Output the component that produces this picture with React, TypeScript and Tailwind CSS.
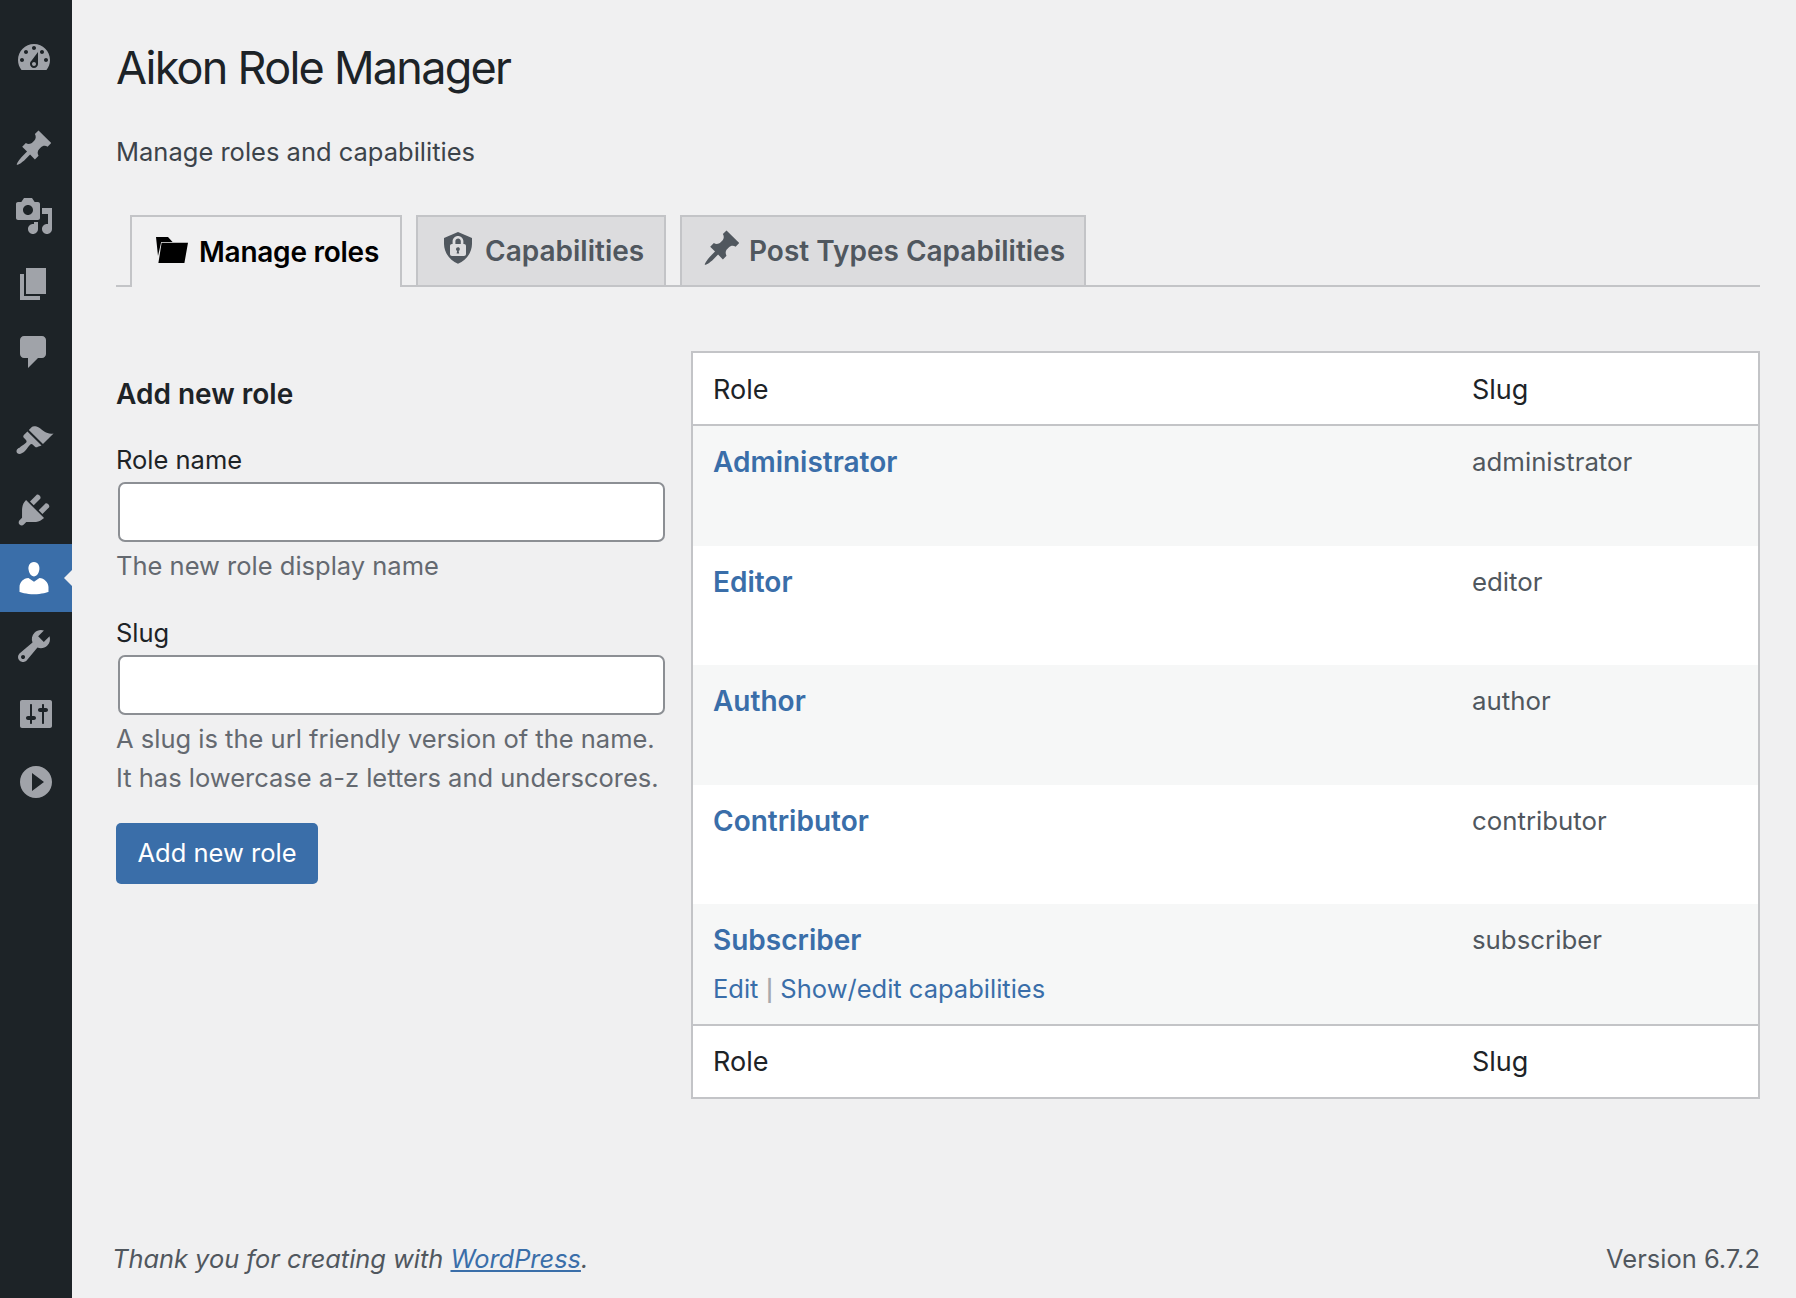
const FONT = "font-['Inter','Liberation_Sans',sans-serif]"

const ICONS = {
  dashboard:
    "M3.76 16h12.48c1.1-1.37 1.76-3.11 1.76-5 0-4.42-3.58-8-8-8s-8 3.58-8 8c0 1.89.66 3.63 1.76 5zM10 4c.55 0 1 .45 1 1s-.45 1-1 1-1-.45-1-1 .45-1 1-1zM6 6c.55 0 1 .45 1 1s-.45 1-1 1-1-.45-1-1 .45-1 1-1zm8 0c.55 0 1 .45 1 1s-.45 1-1 1-1-.45-1-1 .45-1 1-1zm-5.37 5.55L12 7v6c0 1.1-.9 2-2 2s-2-.9-2-2c0-.57.24-1.08.63-1.45zM4 10c.55 0 1 .45 1 1s-.45 1-1 1-1-.45-1-1 .45-1 1-1zm12 0c.55 0 1 .45 1 1s-.45 1-1 1-1-.45-1-1 .45-1 1-1zm-5 3c0-.55-.45-1-1-1s-1 .45-1 1 .45 1 1 1 1-.45 1-1z",
  pin: "M10.44 3.02l1.82-1.82 6.36 6.35-1.83 1.82c-1.05-.68-2.48-.57-3.41.36l-.75.75c-.92.93-1.04 2.35-.35 3.41l-1.83 1.82-2.41-2.41-2.8 2.79c-.42.42-3.38 2.71-3.8 2.29s1.86-3.39 2.28-3.81l2.79-2.79L4.1 9.36l1.83-1.82c1.05.69 2.48.57 3.4-.36l.75-.75c.93-.92 1.05-2.35.36-3.41z",
  media:
    "M13 11V4c0-.55-.45-1-1-1h-1.67L9 1H5L3.67 3H2c-.55 0-1 .45-1 1v7c0 .55.45 1 1 1h10c.55 0 1-.45 1-1zM7 4.5c1.38 0 2.5 1.12 2.5 2.5S8.38 9.5 7 9.5 4.5 8.38 4.5 7 5.62 4.5 7 4.5zM14 6h5v10.5c0 1.38-1.12 2.5-2.5 2.5S14 17.88 14 16.5s1.12-2.5 2.5-2.5c.17 0 .34.02.5.05V9h-3V6zm-4 8.05V13h2v3.5c0 1.38-1.12 2.5-2.5 2.5S7 17.88 7 16.5 8.12 14 9.5 14c.17 0 .34.02.5.05z",
  page: "M6 15V2h10v13H6zm-1 1h8v2H3V5h2v11z",
  comments: "M5 2h9c1.1 0 2 .9 2 2v7c0 1.1-.9 2-2 2h-2l-5 5v-5H5c-1.1 0-2-.9-2-2V4c0-1.1.9-2 2-2z",
  appearance:
    "M14.48 11.06L7.41 3.99l1.5-1.5c.5-.56 2.3-.47 3.51.32 1.21.8 1.43 1.28 2.91 2.1 1.18.64 2.45 1.26 4.45.85zm-.71.71L6.7 4.7 4.93 6.47c-.39.39-.39 1.02 0 1.41l1.06 1.06c.39.39.39 1.03 0 1.42-.6.6-1.43 1.11-2.21 1.69-.35.26-.7.53-1.01.84C1.43 13.23.77 14.8 1.7 15.6c.94.87 2.46.2 3.8-1.07.31-.31.58-.66.84-1.01.57-.78 1.05-1.6 1.69-2.2.39-.39 1.02-.39 1.41 0l1.06 1.06c.39.39 1.02.39 1.41 0z",
  plugins:
    "M13.11 4.36L9.87 7.6 8 5.73l3.24-3.24c.35-.34 1.05-.2 1.56.32.52.51.66 1.21.31 1.55zm-8 1.77l.91-1.12 9.01 9.01-1.19.84c-.71.71-2.63 1.16-3.82 1.16H6.14L4.9 17.26c-.59.59-1.54.59-2.12 0-.59-.58-.59-1.53 0-2.12l1.24-1.24v-3.88c0-1.13.4-3.19 1.09-3.89zm7.26 3.97l3.24-3.24c.34-.35 1.04-.21 1.55.31.52.51.66 1.21.31 1.55l-3.24 3.25z",
  users:
    "M10 9.25c-2.27 0-2.73-3.44-2.73-3.44C7 4.02 7.82 2 9.97 2c2.16 0 2.98 2.02 2.71 3.81 0 0-.41 3.44-2.68 3.44zm0 2.57L12.72 10c2.39 0 4.52 2.33 4.52 4.53v2.49s-3.65 1.13-7.24 1.13c-3.65 0-7.24-1.13-7.24-1.13v-2.49c0-2.25 1.94-4.48 4.47-4.48z",
  tools:
    "M16.68 9.77c-1.34 1.34-3.3 1.67-4.95.99l-5.41 6.52c-.99.99-2.59.99-3.58 0s-.99-2.59 0-3.57l6.52-5.42c-.68-1.65-.35-3.61.99-4.95 1.28-1.28 3.12-1.62 4.72-1.06l-2.89 2.89 2.82 2.82 2.86-2.87c.53 1.58.18 3.39-1.08 4.65zM3.81 16.21c.4.39 1.04.39 1.43 0 .4-.4.4-1.04 0-1.43-.39-.4-1.03-.4-1.43 0-.39.39-.39 1.03 0 1.43z",
  settings:
    "M18 16V4c0-.55-.45-1-1-1H3c-.55 0-1 .45-1 1v12c0 .55.45 1 1 1h14c.55 0 1-.45 1-1zM8 11h1c.55 0 1 .45 1 1s-.45 1-1 1H8v1.5c0 .28-.22.5-.5.5s-.5-.22-.5-.5V13H6c-.55 0-1-.45-1-1s.45-1 1-1h1V5.5c0-.28.22-.5.5-.5s.5.22.5.5V11zm5-2h-1c-.55 0-1-.45-1-1s.45-1 1-1h1V5.5c0-.28.22-.5.5-.5s.5.22.5.5V7h1c.55 0 1 .45 1 1s-.45 1-1 1h-1v5.5c0 .28-.22.5-.5.5s-.5-.22-.5-.5V9z",
  play: "M10 2c4.42 0 8 3.58 8 8s-3.58 8-8 8-8-3.58-8-8 3.58-8 8-8zm-2 12.5l6-4.5-6-4.5v9z",
  folder: "M2 4h6l2.3 2.5H4.6L3 13.5zM4.8 6.9H18l-1.8 10.1H3.2z",
  privacy:
    "M10 9.6c-.6 0-1 .4-1 1 0 .4.3.7.6.8l-.3 1.4h1.3l-.3-1.4c.4-.1.6-.4.6-.8.1-.6-.3-1-.9-1zm.1-4.3c-.7 0-1.4.5-1.4 1.2V8h2.7V6.5c-.1-.7-.6-1.2-1.3-1.2zM10 2L3 5v3c.1 4.4 2.9 8.3 7 9.9 4.1-1.6 6.9-5.5 7-9.9V5l-7-3zm4 11c0 .6-.4 1-1 1H7c-.6 0-1-.4-1-1V9c0-.6.4-1 1-1h.3V6.5C7.4 5.1 8.6 4 10 4c1.4 0 2.6 1.1 2.7 2.5V8h.3c.6 0 1 .4 1 1v4z",
}

type IconName = keyof typeof ICONS

function Icon({ name, className }: { name: IconName; className?: string }) {
  return (
    <svg viewBox="0 0 20 20" className={className} fill="currentColor" aria-hidden>
      <path fillRule="evenodd" d={ICONS[name]} />
    </svg>
  )
}

function MenuItem({ name, active, nudge }: { name: IconName; active?: boolean; nudge?: boolean }) {
  return (
    <div
      className={
        active
          ? "relative flex h-[68px] items-center pl-[14px] bg-[#3a6ea9] text-white"
          : nudge
            ? "flex h-[68px] items-center pl-4 text-[#a0a3a9]"
            : "flex h-[68px] items-center pl-[14px] text-[#a0a3a9]"
      }
    >
      <Icon name={name} className="h-10 w-10" />
      {active && (
        <span className="absolute right-0 top-[26px] h-0 w-0 border-y-8 border-r-8 border-y-transparent border-r-[#f0f0f1]" />
      )}
    </div>
  )
}

function Sidebar() {
  return (
    <aside className="w-[72px] shrink-0 bg-[#1d2327] pt-6">
      <MenuItem name="dashboard" />
      <div className="h-[22px]" />
      <MenuItem name="pin" />
      <MenuItem name="media" />
      <MenuItem name="page" />
      <MenuItem name="comments" />
      <div className="h-[22px]" />
      <MenuItem name="appearance" />
      <MenuItem name="plugins" />
      <MenuItem name="users" active />
      <MenuItem name="tools" />
      <MenuItem name="settings" nudge />
      <MenuItem name="play" nudge />
    </aside>
  )
}

function Tabs() {
  return (
    <div className="mt-[47px] flex h-[72px] items-stretch gap-[14px] border-b-2 border-[#c3c4c7] pl-[14px]">
      <div className="-mb-[2px] flex w-[272px] items-center gap-[7px] border-2 border-b-0 border-[#c3c4c7] bg-[#f0f0f1] pl-5 text-[28px] font-semibold tracking-[-0.25px] text-black">
        <Icon name="folder" className="-mt-[7px] h-10 w-10" />
        Manage roles
      </div>
      <div className="flex w-[250px] items-center gap-[7px] border-2 border-b-0 border-[#c3c4c7] bg-[#dcdcde] pl-5 text-[28px] font-semibold text-[#50575e]">
        <Icon name="privacy" className="-mt-[7px] h-10 w-10" />
        Capabilities
      </div>
      <div className="flex w-[406px] items-center gap-[7px] border-2 border-b-0 border-[#c3c4c7] bg-[#dcdcde] pl-5 text-[28px] font-semibold text-[#50575e]">
        <Icon name="pin" className="-mt-[7px] h-10 w-10" />
        Post Types Capabilities
      </div>
    </div>
  )
}

function AddRoleForm() {
  return (
    <div className="w-[550px] shrink-0 pt-6">
      <h2 className="text-[28px] font-semibold leading-[38px] text-[#1d2327]">Add new role</h2>
      <label className="mt-[31px] block leading-8 text-[#1d2327]">Role name</label>
      <input className="mt-[6px] ml-[2px] block h-[60px] w-[547px] rounded-[7px] border-2 border-[#8c8f94] bg-white" />
      <p className="mt-[8px] leading-8 text-[#646970]">The new role display name</p>
      <label className="mt-[35px] block leading-8 text-[#1d2327]">Slug</label>
      <input className="mt-[6px] ml-[2px] block h-[60px] w-[547px] rounded-[7px] border-2 border-[#8c8f94] bg-white" />
      <p className="mt-[4px] leading-[39px] text-[#646970]">
        A slug is the url friendly version of the name.
        <br />
        It has lowercase a-z letters and underscores.
      </p>
      <button className="mt-[26px] h-[61px] w-[202px] rounded-[5px] bg-[#3a6ea9] text-white">Add new role</button>
    </div>
  )
}

const ROLES = [
  { name: "Administrator", slug: "administrator" },
  { name: "Editor", slug: "editor" },
  { name: "Author", slug: "author" },
  { name: "Contributor", slug: "contributor" },
  { name: "Subscriber", slug: "subscriber", actions: true },
]

function RolesTable() {
  return (
    <div className="w-[1070px] border-2 border-[#c3c4c7] bg-white">
      <div className="grid h-[73px] grid-cols-[759px_1fr] items-center border-b-2 border-[#c3c4c7] pl-5 pt-[3px] text-[27px] text-[#1d2327]">
        <span>Role</span>
        <span>Slug</span>
      </div>
      {ROLES.map((role, i) => (
        <div
          key={role.name}
          className={
            i % 2 === 0
              ? "grid h-[119.5px] grid-cols-[759px_1fr] bg-[#f6f7f7] pl-5 pt-[18px]"
              : "grid h-[119.5px] grid-cols-[759px_1fr] bg-white pl-5 pt-[18px]"
          }
        >
          <div>
            <a className="text-[28px] font-semibold leading-8 text-[#3a6ea9]">{role.name}</a>
            {role.actions && (
              <div className="mt-[13px] text-[25.5px] leading-8 text-[#3a6ea9]">
                Edit <span className="text-[21px] font-semibold text-[#a7aaad]">|</span> Show/edit capabilities
              </div>
            )}
          </div>
          <span className="pt-[2px] text-[25.8px] leading-8 text-[#50575e]">{role.slug}</span>
        </div>
      ))}
      <div className="grid h-[73px] grid-cols-[759px_1fr] items-center border-t-2 border-[#c3c4c7] pl-5 pt-[2px] text-[27px] text-[#1d2327]">
        <span>Role</span>
        <span>Slug</span>
      </div>
    </div>
  )
}

export default function App() {
  return (
    <div className={`${FONT} flex h-[1298px] bg-[#f0f0f1] text-[25.5px] text-[#3c434a]`}>
      <Sidebar />
      <main className="flex min-w-0 flex-1 flex-col pl-11 pr-9">
        <h1 className="mt-[40px] text-[45px] leading-[56px] tracking-[-1.75px] text-[#1d2327]">Aikon Role Manager</h1>
        <p className="mt-[40px] leading-8">Manage roles and capabilities</p>
        <Tabs />
        <div className="mt-[64px] flex items-start gap-[25px]">
          <AddRoleForm />
          <RolesTable />
        </div>
        <footer className="mt-auto flex justify-between pb-[23px] leading-8 text-[#50575e]">
          <span className="-ml-1 text-[25.4px] italic">
            Thank you for creating with <a className="text-[#3a6ea9] underline">WordPress</a>.
          </span>
          <span>Version 6.7.2</span>
        </footer>
      </main>
    </div>
  )
}
